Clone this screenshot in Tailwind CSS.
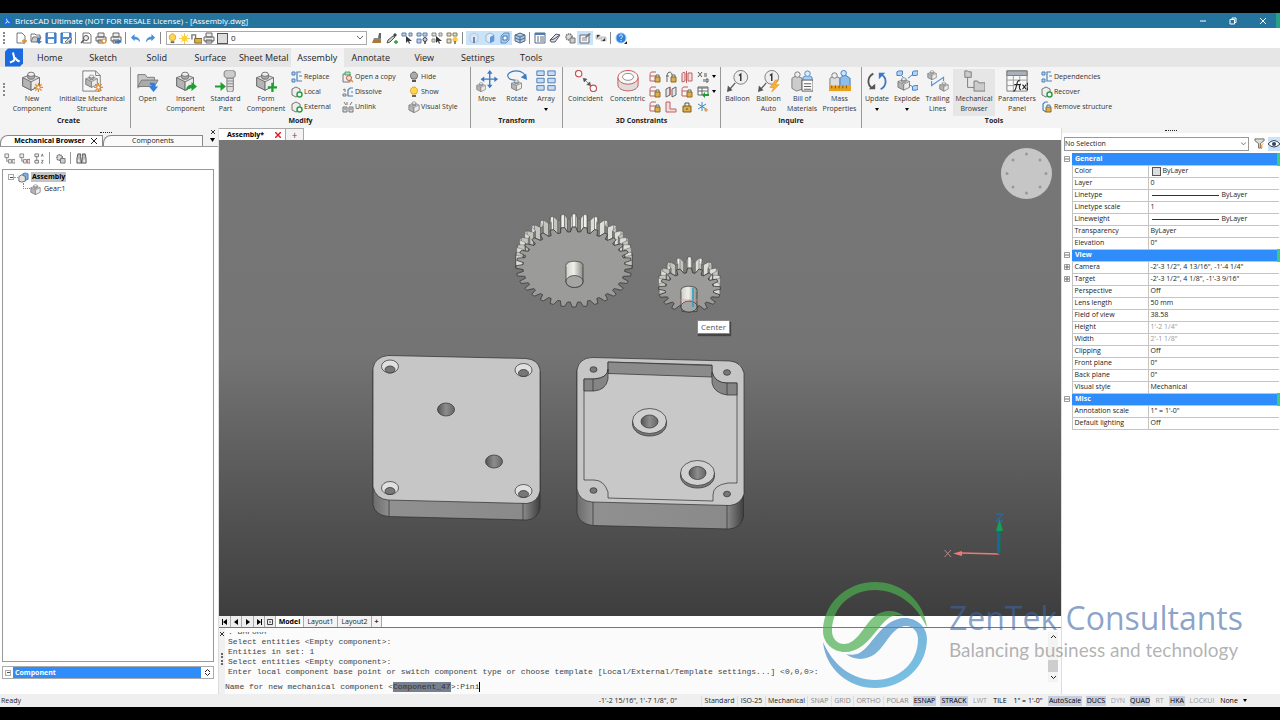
<!DOCTYPE html>
<html lang="en">
<head>
    <meta charset="UTF-8">
    <meta name="viewport" content="width=device-width, initial-scale=1.0">
    <title>BricsCAD Ultimate - [Assembly.dwg]</title>
    <script src="https://cdn.jsdelivr.net/npm/@tailwindcss/browser@4"></script>
</head>
<body class="bg-black font-['Open_Sans','Noto_Sans',sans-serif] text-[#222] text-[7px] leading-[10px]">

    <!-- Icon sprite -->
    <svg class="absolute size-0" aria-hidden="true">
        <defs>
            <linearGradient id="blue-fade" x1="0" y1="0" x2="1" y2="1"><stop offset="0" stop-color="#3fb0e0"/><stop offset="1" stop-color="#4a7cba"/></linearGradient>
            <linearGradient id="pin" x1="0" x2="1"><stop offset="0" stop-color="#cfcfca"/><stop offset=".45" stop-color="#f0f0ea"/><stop offset="1" stop-color="#8a8a86"/></linearGradient>
            <linearGradient id="bore" x1="0" x2="1"><stop offset="0" stop-color="#555"/><stop offset=".5" stop-color="#8d8d8d"/><stop offset="1" stop-color="#666"/></linearGradient>
            <linearGradient id="side" x1="0" x2="1"><stop offset="0" stop-color="#6c6c6c"/><stop offset=".1" stop-color="#909090"/><stop offset=".9" stop-color="#8a8a8a"/><stop offset="1" stop-color="#3f3f3f"/></linearGradient>
        </defs>
        <symbol id="cube" viewBox="0 0 24 24">
            <g stroke="#666" stroke-width="1" stroke-linejoin="round">
                <path d="M2 8 12 4l10 4v10l-10 5L2 18z" fill="#d9d9d9"/>
                <path d="M2 8l10 5v10L2 18z" fill="#b4b4b4"/>
                <path d="M22 8l-10 5v10l10-5z" fill="#ececec"/>
                <path d="M8 4v4c0 2.500 8 2.500 8 0V4" fill="#aaa"/>
                <ellipse cx="12" cy="4" rx="4" ry="2.500" fill="#eee"/>
            </g>
        </symbol>
        <symbol id="spark" viewBox="0 0 10 10"><path d="M5 0v10M0 5h10M1.500 1.500l7 7M8.500 1.500l-7 7" stroke="#e48a2a" stroke-width="1.300"/><circle cx="5" cy="5" r="1.800" fill="#fff" stroke="#e48a2a"/></symbol>
        <symbol id="new-component" viewBox="0 0 24 24"><use href="#cube" width="22" height="24"/><use href="#spark" x="14" y="14" width="10" height="10"/></symbol>
        <symbol id="init" viewBox="0 0 24 24"><path d="M2 1h14l5 5v17H2z" fill="#f8f8f8" stroke="#777"/><path d="M16 1v5h5" fill="none" stroke="#777"/><use href="#cube" x="4" y="4" width="15" height="16"/><use href="#spark" x="14" y="14" width="10" height="10"/></symbol>
        <symbol id="open" viewBox="0 0 24 24"><path d="M1 20V5h8l2 3h8v4" fill="#c6c6c6" stroke="#777"/><path d="M1 18l4-7h18l-4 7z" fill="#aaa" stroke="#777"/><path d="M14 14h4c2 0 2 2 2 4h3l-5 6-5-6h3c0-1 0-2-2-2z" fill="#2f7fe0"/></symbol>
        <symbol id="insert" viewBox="0 0 24 24"><use href="#cube" width="22" height="24"/><path d="M12 23c0-5 3-7 6-7v-3l6 5-6 5v-3c-3 0-4 1-6 3z" fill="#1f9e34"/></symbol>
        <symbol id="bolt" viewBox="0 0 24 24"><path d="M10 2l3-2h6l3 2v5l-3 2h-6l-3-2z" fill="#ccc" stroke="#777"/><path d="M13 9h7v13l-1 2h-5l-1-2z" fill="#ddd" stroke="#777"/><path d="M13 12h7M13 15h7M13 18h7" stroke="#888"/><path d="M0 17h6v-4l6 5-6 5v-4H0z" fill="#1f9e34"/></symbol>
        <symbol id="form" viewBox="0 0 24 24"><use href="#cube" width="22" height="24"/><path d="M19 14v10M14 19h10" stroke="#1f9e34" stroke-width="2.500"/></symbol>
        <symbol id="move" viewBox="0 0 24 24"><path d="M15 2v16M7 10h16" stroke="#3b79c4" stroke-width="1.500"/><path d="M15 0l3 4h-6zM15 20l3-4h-6zM5 10l4-3v6zM24 10l-4-3v6z" fill="#3b79c4"/><use href="#cube" y="13" width="11" height="11"/></symbol>
        <symbol id="rotate" viewBox="0 0 24 24"><path d="M20 9c2-5-3-8-9-8S1 4 2 7s5 4 8 4" fill="none" stroke="#3b79c4" stroke-width="1.300"/><path d="M16 8l6-4 1 7z" fill="#3b79c4"/><use href="#cube" x="5" y="10" width="13" height="13"/></symbol>
        <symbol id="array" viewBox="0 0 24 24"><g fill="#c8ddf5" stroke="#4479b5"><path d="M2 1h8v5H2zM14 1h8v5h-8zM2 9h8v5H2zM14 9h8v5h-8zM2 17h8v5H2zM14 17h8v5h-8z"/></g></symbol>
        <symbol id="coincident" viewBox="0 0 24 24"><g fill="#fff" stroke="#c75050" stroke-width="1.300"><circle cx="4" cy="4" r="3.500"/><circle cx="20" cy="20" r="3.500"/></g><path d="M10 10l6 6M9 9l4 1-3 3zM17 17l-4-1 3-3z" stroke="#555" fill="#555" stroke-width=".7"/></symbol>
        <symbol id="concentric" viewBox="0 0 24 24"><g stroke="#c75050"><path d="M1 8v8c0 9 22 9 22 0V8" fill="#ddd"/><ellipse cx="12" cy="8" rx="11" ry="7.500" fill="#f7f7f7"/><ellipse cx="12" cy="7.500" rx="6" ry="3.800" fill="#fff" stroke="#888"/></g></symbol>
        <symbol id="balloon" viewBox="0 0 24 24"><circle cx="15" cy="8" r="7.500" fill="#eee" stroke="#777"/><path d="M13 6l2-1.500V12" fill="none" stroke="#333" stroke-width="1.600"/><path d="M9 14l-6 7" stroke="#555" stroke-width="1.300"/><path d="M0 24l1-7 5 5z" fill="#555"/></symbol>
        <symbol id="balloon-auto" viewBox="0 0 24 24"><use href="#balloon" width="24" height="24"/><path d="M19 11l-6 8h4l-2 5 8-8h-4l3-5z" fill="#fbb03a" stroke="#d98a10" stroke-width=".6"/></symbol>
        <symbol id="bill" viewBox="0 0 24 24"><path d="M1 9l5-3 6 3v12l-6 2-5-3z" fill="#ccc" stroke="#777"/><circle cx="7" cy="5" r="3" fill="#eee" stroke="#777"/><path d="M13 8l5-3 5 3v4H13z" fill="#a9cdf0" stroke="#4a86c2"/><circle cx="18" cy="4" r="3" fill="#dcecfa" stroke="#4a86c2"/><path d="M12 11h12v12H12z" fill="#fff" stroke="#555"/><path d="M14 15h8M14 18h8M14 21h8" stroke="#555"/></symbol>
        <symbol id="mass" viewBox="0 0 24 24"><path d="M1 9l5-3 6 3v9H1z" fill="#ddd" stroke="#777"/><circle cx="6" cy="6" r="3" fill="#eee" stroke="#777"/><path d="M12 9l5-4 6 4v9H12z" fill="#8fbdea" stroke="#3b79c4"/><circle cx="16" cy="3.500" r="3" fill="#d0e4f8" stroke="#3b79c4"/><path d="M0 17h24v6H0z" fill="#e9a21d"/><path d="M3 17v3M7 17v3M11 17v3M15 17v3M19 17v3" stroke="#7a5208"/></symbol>
        <symbol id="update" viewBox="0 0 24 24"><path d="M8 4C1 8 1 16 7 20" fill="none" stroke="#555" stroke-width="2"/><path d="M3 21h7v-6z" fill="#555"/><path d="M16 21c7-4 7-12 1-16" fill="none" stroke="#3b79c4" stroke-width="2"/><path d="M14 10V3h7z" fill="#3b79c4"/></symbol>
        <symbol id="explode" viewBox="0 0 24 24"><use href="#cube" x="1" y="7" width="15" height="16"/><g fill="#b5d3f2" stroke="#3b79c4"><path d="M1 2l2-1h4v4l-2 1H1zM18 2l2-1h4v4l-2 1h-4zM18 18l2-1h4v4l-2 1h-4z"/><path d="M13 9l5-4M14 16l4 2M6 6l2 2"/></g></symbol>
        <symbol id="trailing" viewBox="0 0 24 24"><use href="#cube" width="11" height="11"/><use href="#cube" x="13" y="12" width="11" height="12"/><path d="M5 12v5l13-9v4" fill="none" stroke="#5b95d6" stroke-width="1.300"/></symbol>
        <symbol id="browser" viewBox="0 0 24 24"><path d="M2 1h3l1 1h3v6H2zM12 12h4l1 2h7v9H12z" fill="#ccc" stroke="#777"/><path d="M5 8v11h7" fill="none" stroke="#777"/></symbol>
        <symbol id="params" viewBox="0 0 24 24"><path d="M1 1h22v22H1z" fill="#f8f8f8" stroke="#777"/><path d="M1 1h22v5H1z" fill="#aab0b8" stroke="#777"/><path d="M8 6v17M15 6v6M1 11h22M1 17h8" stroke="#999"/><path d="M15 12c-4-3-3 12-7 11M9 16h6M16 15c-2 3-2 5 0 7M18 16l4 5M22 16l-4 5M23 14c2 3 1 6 0 8" fill="none" stroke="#222" stroke-width="1.200"/></symbol>
        <symbol id="lamp-off" viewBox="0 0 12 12"><path d="M4 8C1 5 3 1 6 1s5 4 2 7z" fill="#aaa" stroke="#666"/><path d="M4 9h4v2H4z" fill="#555"/></symbol>
        <symbol id="lamp-on" viewBox="0 0 12 12"><path d="M4 8C1 5 3 1 6 1s5 4 2 7z" fill="#ffd453" stroke="#dba220"/><path d="M4 9h4v2H4z" fill="#666"/></symbol>
        <symbol id="sub-blue" viewBox="0 0 12 12"><path d="M1 1h3v3H1zM1 8h3v3H1z" fill="#bbd3ee" stroke="#4a80bd"/><path d="M10 1H6v9h5M11 5H8" fill="none" stroke="#4a80bd" stroke-width="1.200"/></symbol>
        <symbol id="sub-copy" viewBox="0 0 12 12"><path d="M1 3h7v8H1z" fill="#eee" stroke="#777"/><path d="M3 1h5v3H3z" fill="#b9dcc0" stroke="#28a045" stroke-width=".8"/><circle cx="7" cy="7" r="2.500" fill="#f7ded0" stroke="#c06040"/><path d="M9 9l2 2" stroke="#e48a2a" stroke-width="1.500"/></symbol>
        <symbol id="sub-dissolve" viewBox="0 0 12 12"><path d="M1 4l2-1v3M1 8h3v2H1z" fill="none" stroke="#777"/><path d="M11 2H8L6 4v6h5M11 6H9" fill="none" stroke="#4a80bd" stroke-width="1.200"/></symbol>
        <symbol id="sub-green" viewBox="0 0 12 12"><path d="M1 3l4-2 4 2v6l-4 2-4-2z" fill="#eee" stroke="#777"/><circle cx="8.500" cy="8.500" r="2.500" fill="#fff" stroke="#28a045" stroke-width="1.500"/></symbol>
        <symbol id="sub-grey" viewBox="0 0 12 12"><path d="M1 6h4v5H1zM7 6h4v5H7zM2 8h2M8 8h2" fill="#ddd" stroke="#777"/><path d="M2 1l2 3M5 1v3M10 1L8 4" stroke="#777"/></symbol>
        <symbol id="sub-lock" viewBox="0 0 12 12"><path d="M7 1H3C1 1 1 3 1 5v5h6M1 5h6" fill="none" stroke="#c06060"/><path d="M6 6h5v5H6z" fill="#e0ae48" stroke="#8a6a20"/><path d="M7 6V4h3v2" fill="none" stroke="#666"/></symbol>
        <symbol id="sub-arc" viewBox="0 0 12 12"><path d="M2 11V5c0-5 5-5 5-1M1 5h3" fill="none" stroke="#666"/><path d="M6 6h5v5H6z" fill="#e0ae48" stroke="#8a6a20"/><path d="M7 6V4h3v2" fill="none" stroke="#666"/></symbol>
        <symbol id="sub-remove" viewBox="0 0 12 12"><path d="M7 1H4L2 3v6l3 2" fill="none" stroke="#4a80bd" stroke-width="1.200"/><path d="M5 6h5v5H5z" fill="#e0ae48" stroke="#8a6a20"/><path d="M6 6V4h3v2" fill="#bbd3ee" stroke="#4a80bd"/></symbol>
        <symbol id="sub-pair" viewBox="0 0 12 12"><path d="M1 3l4-2v8l-4 2zM7 3l4-2v8l-4 2z" fill="#e4e4e4" stroke="#666"/><path d="M5 1v8" stroke="#c75050"/></symbol>
        <symbol id="sub-sym" viewBox="0 0 12 12"><path d="M1 3c0-2 3-2 3-1v8l-3 1zM7 2h4v8H7z" fill="#f0dede" stroke="#c06060"/><path d="M5.500 0v12" stroke="#c06060"/></symbol>
        <symbol id="sub-red" viewBox="0 0 12 12"><path d="M1 1h4v7h6v3H1z" fill="#f0dede" stroke="#c06060"/></symbol>
        <symbol id="sub-padlock" viewBox="0 0 12 12"><path d="M2 5h8v6H2z" fill="#e0ae48" stroke="#7a6020"/><path d="M4 5V2h4v3M6 7v2" fill="none" stroke="#555"/></symbol>
        <symbol id="sub-star" viewBox="0 0 12 12"><path d="M5 1v9M1 3l8 5M9 3L1 8" stroke="#3b8ac4"/><path d="M9 7v4M7 9h4" stroke="#e48a2a"/></symbol>
        <symbol id="sub-dim" viewBox="0 0 12 12"><path d="M1 1l4 5M5 1L1 6M7 3h3M7 5h3M7 8v3M9 8h2v3H9z" fill="none" stroke="#555"/></symbol>
        <symbol id="sub-table" viewBox="0 0 12 12"><path d="M1 1h10v8H1z" fill="#fff" stroke="#666"/><path d="M1 2h10M1 5h10M5 2v7" stroke="#666"/><path d="M12 8H8V6L5 9l3 3v-2h4z" fill="#1f9e34"/></symbol>
        <symbol id="q-new" viewBox="0 0 12 12"><path d="M2 1h5l3 3v7H2z" fill="#fff" stroke="#777"/><path d="M9 7v5M7 9h5" stroke="#e48a2a" stroke-width="1.300"/></symbol>
        <symbol id="q-open" viewBox="0 0 12 12"><path d="M1 2h4l1 1h4v3M1 2v7" fill="none" stroke="#777"/><path d="M3 5h8l-2 5H1z" fill="#ccc" stroke="#777"/><path d="M7 6h3v3h2l-3 3-3-3h1z" fill="#3b79c4"/></symbol>
        <symbol id="q-save" viewBox="0 0 12 12"><path d="M1 1h10v10H1z" fill="#4f8fd8" stroke="#2e68ae"/><path d="M3 1h6v4H3zM3 7h6v4H3z" fill="#fff"/></symbol>
        <symbol id="q-saveas" viewBox="0 0 12 12"><use href="#q-save" width="12" height="12"/><path d="M5 10l5-5 2 2-5 4z" fill="#ddd" stroke="#555" stroke-width=".7"/></symbol>
        <symbol id="q-preview" viewBox="0 0 12 12"><path d="M3 1h6l2 2v8H3z" fill="#fff" stroke="#777"/><circle cx="6" cy="6" r="2.500" fill="#eee" stroke="#555"/><path d="M4 8l-3 3" stroke="#555" stroke-width="1.500"/></symbol>
        <symbol id="q-print" viewBox="0 0 12 12"><path d="M3 1h6v4H3zM1 5h10v4H1zM3 8h6v3H3z" fill="#eee" stroke="#666"/></symbol>
        <symbol id="q-printer" viewBox="0 0 12 12"><use href="#q-print" width="12" height="12"/><circle cx="9" cy="9" r="2" fill="#fff" stroke="#e48a2a" stroke-width="1.200"/></symbol>
        <symbol id="q-plot" viewBox="0 0 12 12"><use href="#q-print" width="12" height="12"/><path d="M5 9h3V7l4 3-4 2v-1H5z" fill="#3b79c4"/></symbol>
        <symbol id="q-undo" viewBox="0 0 12 12"><path d="M1 5l4-4v3c4 0 6 3 6 6-2-3-4-3-6-3v2z" fill="#4a90d9"/></symbol>
        <symbol id="q-redo" viewBox="0 0 12 12"><path d="M11 5L7 1v3C3 4 1 7 1 10c2-3 4-3 6-3v2z" fill="#4a90d9"/></symbol>
        <symbol id="sun" viewBox="0 0 12 12"><path d="M6 0v12M0 6h12M2 2l8 8M10 2l-8 8" stroke="#f0b81e" stroke-width=".8"/><circle cx="6" cy="6" r="3" fill="#ffd22e"/></symbol>
        <symbol id="unlock" viewBox="0 0 12 12"><path d="M4 6h8v5H4z" fill="#e0ae48" stroke="#7a6020"/><path d="M1 7V2h4v4" fill="none" stroke="#777" stroke-width="1.500"/></symbol>
        <symbol id="q-brush" viewBox="0 0 12 12"><path d="M1 11l2-5h7v5z" fill="#a97740"/><path d="M3 6h7v2H3z" fill="#888"/><path d="M8 1h2v5H7z" fill="#666"/></symbol>
        <symbol id="q-pick" viewBox="0 0 12 12"><path d="M1 11l1-3 5-4 2 1-5 5z" fill="#ccc" stroke="#555"/><path d="M7 3l2-2 2 2-2 2z" fill="#444"/><path d="M10 8v4M8 10h4" stroke="#1f9e34" stroke-width="1.300"/></symbol>
        <symbol id="q-select" viewBox="0 0 12 12"><path d="M1 1h4v3H1zM8 1h3v3H8z" fill="#bcd3ee" stroke="#5a7fa8"/><path d="M5 4v7l2-2 1 3 1-1-1-2h3z" fill="#333"/></symbol>
        <symbol id="q-select2" viewBox="0 0 12 12"><path d="M1 1h4v3H1zM8 1h3v3H8zM1 7h3v3H1z" fill="#ddd" stroke="#888"/><path d="M5 4v7l2-2 1 3 1-1-1-2h3z" fill="#333"/></symbol>
        <symbol id="q-grid" viewBox="0 0 12 12"><path d="M1 1h4v3H1zM7 1h4v3H7zM1 7h4v4H1z" fill="#bcd3ee" stroke="#5a7fa8"/><circle cx="9" cy="7.500" r="2" fill="#ccc" stroke="#444"/><path d="M9 9v3" stroke="#444" stroke-width="1.500"/></symbol>
        <symbol id="q-gridlamp" viewBox="0 0 12 12"><path d="M1 1h4v3H1zM7 1h4v3H7zM1 7h4v4H1z" fill="#ddd" stroke="#8a7a50"/><circle cx="9" cy="7.500" r="2.500" fill="#ffc838"/><path d="M9 9v3" stroke="#666" stroke-width="1.500"/></symbol>
        <symbol id="q-solid" viewBox="0 0 12 12"><path d="M2 3l4-2 4 2v6l-4 2-4-2z" fill="#dbe6f2" stroke="#a9c0da" stroke-width=".8"/><path d="M6 5v6" stroke="#4a6f9d" stroke-width="1.500"/></symbol>
        <symbol id="q-face" viewBox="0 0 12 12"><path d="M2 3l4-2 4 2v6l-4 2-4-2z" fill="#e4edf7" stroke="#8fabca" stroke-width=".8"/><path d="M6 5l4-2v6l-4 2z" fill="#5c97dd"/></symbol>
        <symbol id="q-edge" viewBox="0 0 12 12"><path d="M2 4l3-3h5v7l-3 3H2z" fill="#aacdf3" stroke="#5d8cc2"/><path d="M4 4h4v4H4z" fill="#fff" stroke="#3d70ac"/></symbol>
        <symbol id="q-cube" viewBox="0 0 12 12"><path d="M1 3l5-2 5 2v6l-5 2-5-2z" fill="#b3c6dc" stroke="#4d6d92"/><path d="M1 3l5 2 5-2M6 5v6M1 6l5 2 5-2" fill="none" stroke="#4d6d92"/></symbol>
        <symbol id="q-list" viewBox="0 0 12 12"><path d="M1 1h10v10H1z" fill="#fff" stroke="#4d6d92"/><path d="M1 1h10v2H1z" fill="#4d7db5"/><path d="M3 5h2M3 7h2M3 9h2M6 5h4M6 7h4M6 9h4" stroke="#667"/></symbol>
        <symbol id="q-eraser" viewBox="0 0 12 12"><path d="M1 8l6-6 4 1-5 7H2z" fill="#dde" stroke="#556"/><path d="M1 8l4-1 6-4" fill="none" stroke="#556"/></symbol>
        <symbol id="q-gear" viewBox="0 0 12 12"><circle cx="5" cy="5" r="3" fill="#ddd" stroke="#777" stroke-width="1.600" stroke-dasharray="1.500 .6"/><path d="M6 6h5v5H6z" fill="#ccc" stroke="#777"/></symbol>
        <symbol id="q-edit" viewBox="0 0 12 12"><path d="M1 3h9v8H1z" fill="#f4f4f4" stroke="#667"/><path d="M3 6h5M3 8h5" stroke="#889"/><path d="M6 5l4-4 2 1-5 4z" fill="#777"/></symbol>
        <symbol id="q-swap" viewBox="0 0 12 12"><path d="M1 3h4v4H1zM6 5h5v4H6z" fill="#ddd" stroke="#aaa" stroke-width=".7"/><path d="M2 6V3h3zM10 6v3H7z" fill="#333"/></symbol>
        <symbol id="q-help" viewBox="0 0 12 12"><circle cx="6" cy="6" r="5" fill="#2b83dd" stroke="#9cc7f0"/><path d="M4.500 4.500c0-2 3-2 3 0 0 1-1.500 1-1.500 2.500M6 8v1.200" fill="none" stroke="#fff"/><path d="M9 12h3V9z" fill="#222"/></symbol>
        <symbol id="tree" viewBox="0 0 12 12"><path d="M1 1h4v4H1zM5 7h3v4H5zM9 7h3v4H9zM3 5v4h2" fill="#eee" stroke="#777" stroke-width=".9"/></symbol>
        <symbol id="tree-red" viewBox="0 0 12 12"><path d="M1 1h4v4H1zM5 7h3v4H5zM3 5v4h2" fill="#eee" stroke="#777" stroke-width=".9"/><path d="M9 7h3v4H9z" fill="#f3d9d9" stroke="#a55" stroke-width=".9"/></symbol>
        <symbol id="sort" viewBox="0 0 12 12"><path d="M1 1h4v3H1zM1 8h4v3H1zM3 4v4" fill="#eee" stroke="#777"/><path d="M8 4l1-3 1 3M8 8h2l-2 3h2" fill="none" stroke="#555" stroke-width=".8"/></symbol>
        <symbol id="find" viewBox="0 0 12 12"><path d="M2 1h3v3l1 7H1V6zM10 1H7v3L6 11h5V6z" fill="#bbb" stroke="#555"/><path d="M2 7h2v3H2zM8 7h2v3H8z" fill="#eee"/></symbol>
        <symbol id="brics" viewBox="0 0 18 18"><path d="M0 3l3-3h15v15l-3 3H0z" fill="#1b6be0"/><path d="M8 4c1 5 2 6 1 8-1 1-2 1-4 2" fill="none" stroke="#fff" stroke-width="2"/><path d="M10 9c1 2 2 3 3 3" fill="none" stroke="#fff" stroke-width="2"/><circle cx="13.500" cy="12.500" r="1.300" fill="#fff"/></symbol>
    </svg>

    <div class="relative flex min-h-screen flex-col py-[13px]">

        <!-- Title bar -->
        <header class="flex h-[15px] shrink-0 items-center border-r-4 border-[#27a085] bg-[#25749e] pl-[3px] text-[8px] text-white">
            <svg class="mr-1 size-2"><use href="#brics"/></svg>
            <h1>BricsCAD Ultimate (NOT FOR RESALE License) - [Assembly.dwg]</h1>
            <div class="ml-auto flex gap-[22px] pr-[9px]">
                <button aria-label="Minimize"><svg class="size-2" viewBox="0 0 8 8"><path d="M1 4h6" stroke="#fff"/></svg></button>
                <button aria-label="Restore"><svg class="size-2" viewBox="0 0 8 8"><path d="M1 2.500h4.500V7H1zM3 2V1h4v4.500H6" fill="none" stroke="#fff"/></svg></button>
                <button aria-label="Close"><svg class="size-2" viewBox="0 0 8 8"><path d="M1 1l6 6M7 1L1 7" stroke="#fff"/></svg></button>
            </div>
        </header>

        <!-- Quick access toolbar -->
        <div class="flex h-5 shrink-0 items-center bg-white pl-[3px]">
            <span class="mr-2 h-3 border-l-2 border-dotted border-[#888]"></span>
            <button class="flex w-[15px] justify-center" aria-label="New"><svg class="size-3"><use href="#q-new"/></svg></button>
            <button class="flex w-[15px] justify-center" aria-label="Open"><svg class="size-3"><use href="#q-open"/></svg></button>
            <button class="flex w-[15px] justify-center" aria-label="Save"><svg class="size-3"><use href="#q-save"/></svg></button>
            <button class="flex w-[15px] justify-center" aria-label="Save as"><svg class="size-3"><use href="#q-saveas"/></svg></button>
            <span class="mx-[2px] h-3 w-px bg-[#888]"></span>
            <button class="flex w-[15px] justify-center" aria-label="Print preview"><svg class="size-3"><use href="#q-preview"/></svg></button>
            <button class="flex w-[15px] justify-center" aria-label="Print"><svg class="size-3"><use href="#q-printer"/></svg></button>
            <button class="flex w-[15px] justify-center" aria-label="Publish"><svg class="size-3"><use href="#q-plot"/></svg></button>
            <span class="mx-[2px] h-3 w-px bg-[#888]"></span>
            <button class="flex w-[15px] justify-center" aria-label="Undo"><svg class="size-[11px]"><use href="#q-undo"/></svg></button>
            <button class="flex w-[15px] justify-center" aria-label="Redo"><svg class="size-[11px]"><use href="#q-redo"/></svg></button>
            <span class="mx-[2px] h-3 w-px bg-[#888]"></span>
            <button class="ml-[3px] flex h-[14px] w-[201px] items-center gap-px border border-[#aaa] bg-white pr-[3px] text-[8px]" aria-label="Current layer">
                <svg class="size-[11px]"><use href="#lamp-on"/></svg>
                <svg class="size-[11px]"><use href="#sun"/></svg>
                <svg class="size-[11px]"><use href="#unlock"/></svg>
                <svg class="size-3"><use href="#q-print"/></svg>
                <span class="ml-px size-[11px] border border-[#555] bg-[#ddd]"></span>
                <span class="ml-[2px]">0</span>
                <svg class="ml-auto h-1 w-[6px]" viewBox="0 0 6 4"><path d="M0 0l3 3 3-3" fill="none" stroke="#666"/></svg>
            </button>
            <button class="ml-[2px] flex w-[15px] justify-center" aria-label="Match properties"><svg class="size-3"><use href="#q-brush"/></svg></button>
            <button class="flex w-[15px] justify-center" aria-label="Pick"><svg class="size-3"><use href="#q-pick"/></svg></button>
            <button class="flex w-[15px] justify-center" aria-label="Select"><svg class="size-3"><use href="#q-select"/></svg></button>
            <button class="flex w-[15px] justify-center" aria-label="Hide entities"><svg class="size-3"><use href="#q-grid"/></svg></button>
            <button class="flex w-[15px] justify-center" aria-label="Isolate entities"><svg class="size-3"><use href="#q-select2"/></svg></button>
            <button class="flex w-[15px] justify-center" aria-label="Show entities"><svg class="size-3"><use href="#q-gridlamp"/></svg></button>
            <span class="mx-[3px] h-3 w-px bg-[#888]"></span>
            <button class="flex w-4 justify-center bg-[#cbe3f8] py-px" aria-label="Select edges"><svg class="size-3"><use href="#q-solid"/></svg></button>
            <button class="flex w-[15px] justify-center bg-[#cbe3f8] py-px" aria-label="Select faces"><svg class="size-3"><use href="#q-face"/></svg></button>
            <button class="flex w-[15px] justify-center bg-[#cbe3f8] py-px" aria-label="Detect boundaries"><svg class="size-3"><use href="#q-edge"/></svg></button>
            <button class="flex w-[15px] justify-center" aria-label="Select solids"><svg class="size-3"><use href="#q-cube"/></svg></button>
            <span class="mx-[2px] h-3 w-px bg-[#888]"></span>
            <button class="flex w-[15px] justify-center" aria-label="Properties"><svg class="size-3"><use href="#q-list"/></svg></button>
            <button class="flex w-[15px] justify-center" aria-label="Purge"><svg class="size-3"><use href="#q-eraser"/></svg></button>
            <button class="flex w-[15px] justify-center" aria-label="Settings"><svg class="size-3"><use href="#q-gear"/></svg></button>
            <button class="flex w-4 justify-center bg-[#cbe3f8] py-px" aria-label="Customize"><svg class="size-3"><use href="#q-edit"/></svg></button>
            <button class="flex w-[15px] justify-center" aria-label="Switch"><svg class="size-3"><use href="#q-swap"/></svg></button>
            <span class="mx-[2px] h-3 w-px bg-[#888]"></span>
            <button class="flex w-[15px] justify-center" aria-label="Help"><svg class="size-3"><use href="#q-help"/></svg></button>
        </div>

        <!-- Ribbon tabs -->
        <nav class="flex h-[19px] shrink-0 items-stretch bg-[#e6e6e6] pl-[5px] text-[9px]">
            <svg class="h-[19px] w-[18px]"><use href="#brics"/></svg>
            <div class="grid w-[535px] grid-cols-10 whitespace-nowrap">
                <button>Home</button>
                <button>Sketch</button>
                <button>Solid</button>
                <button>Surface</button>
                <button>Sheet Metal</button>
                <button class="bg-[#f4f4f4]">Assembly</button>
                <button>Annotate</button>
                <button>View</button>
                <button>Settings</button>
                <button>Tools</button>
            </div>
        </nav>

        <!-- Ribbon -->
        <div class="flex h-[61px] shrink-0 bg-[#f4f4f4] pl-[3px] text-center text-[#333]">
            <span class="mt-4 mr-[2px] h-[13px] border-l-2 border-dotted border-[#888]"></span>
            <section class="flex w-[124px] flex-col border-r border-[#999]">
                <div class="flex flex-1">
                    <button class="flex w-[50px] flex-col items-center pt-[3px]"><svg class="mb-[2px] size-[22px]"><use href="#new-component"/></svg>New<br>Component</button>
                    <button class="flex w-[70px] flex-col items-center pt-[3px]"><svg class="mb-[2px] size-[22px]"><use href="#init"/></svg>Initialize Mechanical<br>Structure</button>
                </div>
                <h2 class="h-3 font-bold text-[#222]">Create</h2>
            </section>
            <section class="flex w-[340px] flex-col border-r border-[#999]">
                <div class="flex flex-1">
                    <button class="flex w-[33px] flex-col items-center pt-[3px]"><svg class="mb-[2px] size-[22px]"><use href="#open"/></svg>Open</button>
                    <button class="flex w-[43px] flex-col items-center pt-[3px]"><svg class="mb-[2px] size-[22px]"><use href="#insert"/></svg>Insert<br>Component</button>
                    <button class="flex w-[37px] flex-col items-center pt-[3px]"><svg class="mb-[2px] size-[22px]"><use href="#bolt"/></svg>Standard<br>Part</button>
                    <button class="flex w-[44px] flex-col items-center pt-[3px]"><svg class="mb-[2px] size-[22px]"><use href="#form"/></svg>Form<br>Component</button>
                    <div class="flex w-[54px] flex-col items-start pt-[2px] pl-[3px]">
                        <button class="flex h-[15px] items-center gap-px"><svg class="size-3"><use href="#sub-blue"/></svg>Replace</button>
                        <button class="flex h-[15px] items-center gap-px"><svg class="size-3"><use href="#sub-green"/></svg>Local</button>
                        <button class="flex h-[15px] items-center gap-px"><svg class="size-3"><use href="#sub-green"/></svg>External</button>
                    </div>
                    <div class="flex w-[66px] flex-col items-start pt-[2px]">
                        <button class="flex h-[15px] items-center gap-px"><svg class="size-3"><use href="#sub-copy"/></svg>Open a copy</button>
                        <button class="flex h-[15px] items-center gap-px"><svg class="size-3"><use href="#sub-dissolve"/></svg>Dissolve</button>
                        <button class="flex h-[15px] items-center gap-px"><svg class="size-3"><use href="#sub-grey"/></svg>Unlink</button>
                    </div>
                    <div class="flex flex-col items-start pt-[2px]">
                        <button class="flex h-[15px] items-center gap-px"><svg class="size-3"><use href="#lamp-off"/></svg>Hide</button>
                        <button class="flex h-[15px] items-center gap-px"><svg class="size-3"><use href="#lamp-on"/></svg>Show</button>
                        <button class="flex h-[15px] items-center gap-px"><svg class="size-3"><use href="#cube"/></svg>Visual Style</button>
                    </div>
                </div>
                <h2 class="h-3 font-bold text-[#222]">Modify</h2>
            </section>
            <section class="flex w-[92px] flex-col border-r border-[#999]">
                <div class="flex flex-1">
                    <button class="flex w-[32px] flex-col items-center pt-[3px]"><svg class="mb-[2px] size-[22px]"><use href="#move"/></svg>Move</button>
                    <button class="flex w-[28px] flex-col items-center pt-[3px]"><svg class="mb-[2px] size-[22px]"><use href="#rotate"/></svg>Rotate</button>
                    <button class="flex w-[30px] flex-col items-center pt-[3px]"><svg class="mb-[2px] size-[22px]"><use href="#array"/></svg>Array<svg class="mt-1 h-[3px] w-1" viewBox="0 0 4 3"><path d="M0 0h4L2 3z"/></svg></button>
                </div>
                <h2 class="h-3 font-bold text-[#222]">Transform</h2>
            </section>
            <section class="flex w-[158px] flex-col border-r border-[#999]">
                <div class="flex flex-1">
                    <button class="flex w-[45px] flex-col items-center pt-[3px]"><svg class="mb-[2px] size-[22px]"><use href="#coincident"/></svg>Coincident</button>
                    <button class="flex w-[39px] flex-col items-center pt-[3px]"><svg class="mb-[2px] size-[22px]"><use href="#concentric"/></svg>Concentric</button>
                    <div class="grid h-[47px] grid-cols-4 place-items-center gap-x-1 pt-[2px] pl-[2px]">
                        <button aria-label="Coplanar"><svg class="size-3"><use href="#sub-lock"/></svg></button>
                        <button aria-label="Tangent"><svg class="size-3"><use href="#sub-arc"/></svg></button>
                        <button aria-label="Symmetric"><svg class="size-3"><use href="#sub-sym"/></svg></button>
                        <button aria-label="Distance"><svg class="size-3"><use href="#sub-dim"/></svg></button>
                        <button aria-label="Radius"><svg class="size-3"><use href="#sub-lock"/></svg></button>
                        <button aria-label="Parallel"><svg class="size-3"><use href="#sub-pair"/></svg></button>
                        <button aria-label="Angle"><svg class="size-3"><use href="#sub-lock"/></svg></button>
                        <button aria-label="Table"><svg class="size-3"><use href="#sub-table"/></svg></button>
                        <button aria-label="Rigid set"><svg class="size-3"><use href="#sub-lock"/></svg></button>
                        <button aria-label="Perpendicular"><svg class="size-3"><use href="#sub-red"/></svg></button>
                        <button aria-label="Fix"><svg class="size-3"><use href="#sub-padlock"/></svg></button>
                        <button aria-label="Path"><svg class="size-3"><use href="#sub-star"/></svg></button>
                    </div>
                    <div class="flex flex-col gap-3 pt-2 pl-[3px]">
                        <svg class="h-[3px] w-1" viewBox="0 0 4 3"><path d="M0 0h4L2 3z"/></svg>
                        <svg class="h-[3px] w-1" viewBox="0 0 4 3"><path d="M0 0h4L2 3z"/></svg>
                    </div>
                </div>
                <h2 class="h-3 font-bold text-[#222]">3D Constraints</h2>
            </section>
            <section class="flex w-[141px] flex-col border-r border-[#999]">
                <div class="flex flex-1">
                    <button class="flex w-[33px] flex-col items-center pt-[3px]"><svg class="mb-[2px] size-[22px]"><use href="#balloon"/></svg>Balloon</button>
                    <button class="flex w-[29px] flex-col items-center pt-[3px]"><svg class="mb-[2px] size-[22px]"><use href="#balloon-auto"/></svg>Balloon<br>Auto</button>
                    <button class="flex w-[38px] flex-col items-center pt-[3px]"><svg class="mb-[2px] size-[22px]"><use href="#bill"/></svg>Bill of<br>Materials</button>
                    <button class="flex w-[37px] flex-col items-center pt-[3px]"><svg class="mb-[2px] size-[22px]"><use href="#mass"/></svg>Mass<br>Properties</button>
                </div>
                <h2 class="h-3 font-bold text-[#222]">Inquire</h2>
            </section>
            <section class="flex w-[264px] flex-col">
                <div class="flex flex-1">
                    <button class="flex w-[30px] flex-col items-center pt-[3px]"><svg class="mb-[2px] size-[22px]"><use href="#update"/></svg>Update<svg class="mt-1 h-[3px] w-1" viewBox="0 0 4 3"><path d="M0 0h4L2 3z"/></svg></button>
                    <button class="flex w-[30px] flex-col items-center pt-[3px]"><svg class="mb-[2px] size-[22px]"><use href="#explode"/></svg>Explode<svg class="mt-1 h-[3px] w-1" viewBox="0 0 4 3"><path d="M0 0h4L2 3z"/></svg></button>
                    <button class="flex w-[31px] flex-col items-center pt-[3px]"><svg class="mb-[2px] size-[22px]"><use href="#trailing"/></svg>Trailing<br>Lines</button>
                    <button class="mt-[2px] flex w-[42px] flex-col items-center bg-[#e6e6e6] pt-px"><svg class="mb-[2px] size-[22px]"><use href="#browser"/></svg>Mechanical<br>Browser</button>
                    <button class="flex w-[44px] flex-col items-center pt-[3px]"><svg class="mb-[2px] size-[22px]"><use href="#params"/></svg>Parameters<br>Panel</button>
                    <div class="flex flex-col items-start pt-[2px] pl-[2px]">
                        <button class="flex h-[15px] items-center gap-px"><svg class="size-3"><use href="#sub-blue"/></svg>Dependencies</button>
                        <button class="flex h-[15px] items-center gap-px"><svg class="size-3"><use href="#sub-green"/></svg>Recover</button>
                        <button class="flex h-[15px] items-center gap-px"><svg class="size-3"><use href="#sub-remove"/></svg>Remove structure</button>
                    </div>
                </div>
                <h2 class="h-3 font-bold text-[#222]">Tools</h2>
            </section>
        </div>

        <main class="flex min-h-0 flex-1 bg-white">

            <!-- Mechanical browser -->
            <aside class="flex w-[219px] shrink-0 flex-col border-r border-[#ddd]">
                <div class="flex h-2 items-center bg-[#f3f3f3] pr-[3px]">
                    <span class="mx-auto w-3 border-t border-dotted border-[#222]"></span>
                    <svg class="size-1" viewBox="0 0 4 4"><path d="M0 0l4 4M4 0L0 4" stroke="#333"/></svg>
                </div>
                <div class="flex h-[11px] items-end border-b border-[#999] bg-[#f3f3f3] text-center">
                    <button class="flex h-[11px] w-[103px] items-center justify-center gap-[6px] rounded-tl-lg border border-b-0 border-[#888] bg-white pl-2 font-bold text-black">Mechanical Browser
                        <svg class="size-[6px]" viewBox="0 0 6 6"><path d="M0 0l6 6M6 0L0 6" stroke="#222"/></svg>
                    </button>
                    <button class="h-[11px] w-[100px] rounded-tl-lg border border-b-0 border-[#888] bg-[#fafafa]">Components</button>
                    <svg class="mb-1 ml-[7px] h-1 w-[5px]" viewBox="0 0 5 4"><path d="M0 0h5L2.500 4z"/></svg>
                </div>
                <div class="flex h-[22px] items-center pl-1">
                    <button aria-label="Expand all"><svg class="mr-1 size-[11px]"><use href="#tree"/></svg></button>
                    <button aria-label="Collapse all"><svg class="mr-1 size-[11px]"><use href="#tree-red"/></svg></button>
                    <button aria-label="Sort"><svg class="mr-1 size-[11px]"><use href="#sort"/></svg></button>
                    <span class="mr-[5px] h-3 w-px bg-[#999]"></span>
                    <button aria-label="Settings"><svg class="mr-1 size-[11px]"><use href="#q-gear"/></svg></button>
                    <span class="mr-[5px] h-3 w-px bg-[#999]"></span>
                    <button aria-label="Find"><svg class="size-[11px]"><use href="#find"/></svg></button>
                </div>
                <div class="mr-[4px] ml-[2px] flex-1 border border-[#999] pt-px pl-[5px]">
                    <div class="flex h-3 items-center">
                        <span class="flex size-[6px] items-center justify-center border border-[#aaa]"><i class="h-px w-[3px] bg-[#555]"></i></span>
                        <i class="w-1 border-t border-dotted border-[#999]"></i>
                        <svg class="mr-[2px] size-[11px]" viewBox="0 0 12 12"><path d="M5 2l3-1 3 1v6L8 9z" fill="#78aee6" stroke="#4a80bd"/><path d="M1 5l3-2 4 2v5l-4 1-3-1z" fill="#e4e4e4" stroke="#666"/></svg>
                        <span class="bg-[#c4c4c4] px-px font-bold text-black">Assembly</span>
                    </div>
                    <div class="flex h-3 items-center pl-[15px]">
                        <i class="mb-[6px] h-[6px] w-[7px] border-b border-l border-dotted border-[#888]"></i>
                        <svg class="mr-[3px] size-[11px]"><use href="#cube"/></svg>
                        <span>Gear:1</span>
                    </div>
                </div>
                <div class="mt-1 mr-[4px] mb-[15px] ml-[2px] flex h-[13px] items-stretch border border-[#aaa]">
                    <span class="flex w-[10px] items-center justify-center"><i class="flex size-[6px] items-center justify-center border border-[#aaa]"><b class="h-px w-[3px] bg-[#555]"></b></i></span>
                    <h2 class="flex flex-1 items-center bg-[#2e8cfb] pl-[2px] font-bold text-white">Component</h2>
                    <button class="flex w-3 flex-col items-center justify-between py-[2px]" aria-label="Scroll">
                        <svg class="h-[3px] w-[5px]" viewBox="0 0 5 3"><path d="M0 3l2.500-2.500L5 3" fill="none" stroke="#222"/></svg>
                        <svg class="h-[3px] w-[5px]" viewBox="0 0 5 3"><path d="M0 0l2.500 2.500L5 0" fill="none" stroke="#222"/></svg>
                    </button>
                </div>
            </aside>

            <!-- Drawing area -->
            <section class="flex min-w-0 flex-1 flex-col">
                <div class="flex h-3 shrink-0">
                    <button class="flex w-[67px] items-center justify-between border-t border-r border-[#aaa] pr-1 pl-2 font-bold text-black">Assembly*
                        <svg class="size-[6px]" viewBox="0 0 6 6"><path d="M0 0l6 6M6 0L0 6" stroke="#d22" stroke-width="1.500"/></svg>
                    </button>
                    <button class="w-[18px] border-t border-r border-[#aaa] bg-[#f3f3f3] text-[10px] text-[#555]">+</button>
                </div>
                <div class="relative min-h-0 flex-1 bg-linear-to-b from-[#777] via-[#747474] via-45% to-[#3e3e3e]">
                    <svg class="absolute inset-0 h-full w-full" viewBox="219 140 842 476">
                        <g stroke="#2e2e2e" stroke-width=".7" stroke-linejoin="round">
                            <g id="gears"></g>

                            <path d="M566 265v17c0 7 17 7 17 0v-17z" fill="url(#pin)"/>
                            <ellipse cx="574.500" cy="265" rx="8.500" ry="4" fill="url(#pin)" stroke="none"/>
                            <path d="M566 265c0-5 17-5 17 0" fill="none"/>
                            <ellipse cx="574.500" cy="281.500" rx="8.500" ry="6" fill="#a5a5a3"/>

                            <path d="M681 290v16c0 8 16 8 16 0v-16z" fill="url(#pin)"/>
                            <ellipse cx="689" cy="290" rx="8" ry="4" fill="url(#pin)" stroke="none"/>
                            <path d="M681 290c0-5 16-5 16 0" fill="none"/>
                            <ellipse cx="689" cy="306.500" rx="8" ry="5.500" fill="#a5a5a3"/>
                            <path d="M693 288v19" stroke="#1fa0c8" stroke-width="1.500"/>
                            <path d="M677 300h22" stroke="#d88"/>

                            <!-- cover plate -->
                            <path d="M373 370v135q2 10 15 11.500L527 520q11-1 13-12V372z" fill="url(#side)"/>
                            <path d="M373 368q2-11 15-12.500L526 358.500q12 1 14 11V491q-2 11-13 12.500L388 500q-12-1-15-13z" fill="#c6c6c6"/>
                            <path d="M389 500v16M523 503v17" fill="none"/>
                            <g fill="#e0e0e0">
                                <ellipse cx="390" cy="366.500" rx="8.500" ry="6.500"/><ellipse cx="523.500" cy="370" rx="8.500" ry="6.500"/>
                                <ellipse cx="390" cy="488" rx="8.500" ry="6.500"/><ellipse cx="523.500" cy="491" rx="8.500" ry="6.500"/>
                            </g>
                            <g fill="#777">
                                <ellipse cx="390" cy="369.500" rx="5" ry="3.500"/><ellipse cx="523.500" cy="373" rx="5" ry="3.500"/>
                                <ellipse cx="390" cy="491" rx="5" ry="3.500"/><ellipse cx="523.500" cy="494" rx="5" ry="3.500"/>
                            </g>
                            <g fill="url(#bore)"><ellipse cx="446" cy="409.500" rx="8.500" ry="6.500"/><ellipse cx="494" cy="461.500" rx="8.500" ry="6.500"/></g>

                            <!-- housing -->
                            <path d="M577 370v143q2 11 16 12.500L729 529q12-1 14.500-12V374z" fill="url(#side)"/>
                            <path d="M577 370q2-12 15-12.500L730 361q11 1 14 12v121q-3 10-14 11.500L592 502q-13-1-15-13z" fill="#c6c6c6"/>
                            <path d="M593 502v23M727 505v24" fill="none"/>
                            <path d="M584 379h10q14-1 14-10v-7l104 3v7q3 11 15 11h10v100h-9q-15 2-15 12v6l-105-3v-6q-4-12-14-12h-10z" fill="#c8c8c8"/>
                            <path d="M608 362l104 3.500v11.500L608 373.500z" fill="#8b8b8b"/>
                            <path d="M584 379h10q14-1 14-10v10q-2 11-14 12h-10z" fill="#858585"/>
                            <path d="M712 372q3 11 15 11h10v12h-10q-13-2-15-12z" fill="#858585"/>
                            <path d="M593 379v12M727 383v12" fill="none"/>
                            <g fill="#777">
                                <path d="M632.500 421v3c1 16 33 16 34 0v-3z"/><path d="M680.500 473v3c1 16 33 16 34 0v-3z"/>
                            </g>
                            <g fill="#d0d0d0"><ellipse cx="649.500" cy="421" rx="17" ry="12.500"/><ellipse cx="697.500" cy="473" rx="17" ry="12.500"/></g>
                            <g fill="url(#bore)"><ellipse cx="649.500" cy="421.500" rx="8.500" ry="6.500"/><ellipse cx="697.500" cy="473" rx="8.500" ry="6.500"/></g>
                            <g fill="#777">
                                <ellipse cx="593.500" cy="369.500" rx="3.500" ry="2.800"/><ellipse cx="727" cy="372.500" rx="3.500" ry="2.800"/>
                                <ellipse cx="593.500" cy="490.500" rx="3.500" ry="2.800"/><ellipse cx="727" cy="494" rx="3.500" ry="2.800"/>
                            </g>
                        </g>

                        <!-- look-from widget -->
                        <circle cx="1026.500" cy="173.500" r="25.500" fill="#c6c6c6"/>
                        <g fill="#999">
                            <circle cx="1026.500" cy="154" r="1.500"/><circle cx="1026.500" cy="193" r="1.500"/><circle cx="1007" cy="173.500" r="1.500"/><circle cx="1046" cy="173.500" r="1.500"/>
                            <circle cx="1013" cy="160" r="1.500"/><circle cx="1040" cy="160" r="1.500"/><circle cx="1013" cy="187" r="1.500"/><circle cx="1040" cy="187" r="1.500"/>
                        </g>

                        <!-- UCS icon -->
                        <path d="M999 554l-38-1" stroke="#ef7b74" stroke-width="1.300"/>
                        <path d="M953 553.500l9-2.500v5z" fill="#ef7b74"/>
                        <path d="M944.500 550l6.500 7M951 550l-6.500 7" stroke="#c99" stroke-width=".8"/>
                        <path d="M998.500 554v-24" stroke="#176a9c" stroke-width="2.500"/>
                        <path d="M1000 554v-24" stroke="#0d7a4c"/>
                        <path d="M999.500 519l3.500 12h-7z" fill="#12a05a"/>
                        <path d="M996 514h7l-7 7h7" fill="none" stroke="#2a6fa8"/>
                    </svg>
                    <div class="absolute top-[180px] left-[478px] border border-[#888] bg-white px-[3px] text-[8px] leading-[12px] text-[#555] shadow-[1px_2px_1px_#0006]">Center</div>
                </div>

                <!-- Layout tabs -->
                <div class="flex h-3 shrink-0 items-stretch border-b border-[#777] leading-[11px]">
                    <button class="flex w-[12px] items-center justify-center border-r border-[#aaa] bg-[#eee]" aria-label="First"><svg class="size-[6px]" viewBox="0 0 6 6"><path d="M0 0h1v6H0zM5 0v6L1 3z"/></svg></button>
                    <button class="flex w-[11px] items-center justify-center border-r border-[#aaa] bg-[#eee]" aria-label="Previous"><svg class="size-[6px]" viewBox="0 0 6 6"><path d="M5 0v6L1 3z"/></svg></button>
                    <button class="flex w-[12px] items-center justify-center border-r border-[#aaa] bg-[#eee]" aria-label="Next"><svg class="size-[6px]" viewBox="0 0 6 6"><path d="M1 0v6l4-3z"/></svg></button>
                    <button class="flex w-[11px] items-center justify-center border-r border-[#aaa] bg-[#eee]" aria-label="Last"><svg class="size-[6px]" viewBox="0 0 6 6"><path d="M5 0h1v6H5zM1 0v6l4-3z"/></svg></button>
                    <button class="flex w-[11px] items-center justify-center border-r border-[#aaa] bg-[#eee]" aria-label="Layout list"><svg class="size-[6px]" viewBox="0 0 6 6"><path d="M.5.5h5v5h-5zM2 3h2" fill="none" stroke="#444"/></svg></button>
                    <button class="w-[27px] font-bold text-black">Model</button>
                    <button class="w-[35px] border-x border-[#aaa] bg-[#f3f3f3]">Layout1</button>
                    <button class="w-[34px] border-r border-[#aaa] bg-[#f3f3f3]">Layout2</button>
                    <button class="w-[10px] border-r border-[#aaa] bg-[#f3f3f3] font-bold">+</button>
                </div>

                <!-- Command line -->
                <div class="flex h-[66px] shrink-0 bg-[#fbfbfb] font-['Liberation_Mono',monospace] text-[8px] text-[#444]">
                    <div class="flex w-[6px] flex-col items-center gap-[17px] bg-[#f0f0f0] pt-1">
                        <svg class="size-1" viewBox="0 0 4 4"><path d="M0 0l4 4M4 0L0 4" stroke="#333"/></svg>
                        <span class="h-3 border-l-2 border-dotted border-[#666]"></span>
                    </div>
                    <div class="flex min-w-0 flex-1 flex-col">
                        <div class="mt-1 flex h-[45px] flex-col justify-end overflow-hidden pl-[3px] whitespace-pre">
                            <p>: BMFORM</p>
                            <p>Select entities &lt;Empty component&gt;:</p>
                            <p>Entities in set: 1</p>
                            <p>Select entities &lt;Empty component&gt;:</p>
                            <p>Enter local component base point or switch component type or choose template [Local/External/Template settings...] &lt;0,0,0&gt;:</p>
                        </div>
                        <label class="mt-[4px] flex h-3 items-center whitespace-pre">Name for new mechanical component &lt;<mark class="bg-[#77808f] text-[#333]">Component_47</mark>&gt;:<input type="text" value="Pini" class="w-[20px] border-r border-black bg-transparent outline-none"></label>
                    </div>
                    <div class="mt-1 mr-[3px] mb-3 flex w-[10px] flex-col items-center bg-[#f3f3f3] py-[3px]">
                        <svg class="h-[3px] w-[5px]" viewBox="0 0 5 3"><path d="M0 3l2.500-2.500L5 3" fill="none" stroke="#222"/></svg>
                        <span class="mt-auto mb-1 h-3 w-full bg-[#cdcdcd]"></span>
                        <svg class="h-[3px] w-[5px]" viewBox="0 0 5 3"><path d="M0 0l2.500 2.500L5 0" fill="none" stroke="#222"/></svg>
                    </div>
                </div>
            </section>

            <!-- Properties -->
            <aside class="w-[219px] shrink-0 border-l border-[#ddd]">
                <div class="flex h-[5px] items-center justify-center bg-[#f3f3f3]"><span class="w-3 border-t border-dotted border-[#222]"></span></div>
                <div class="mt-[3px] mb-[2px] flex h-[15px] items-center">
                    <select class="ml-[2px] h-[14px] w-[185px] appearance-none border border-[#999] bg-white" aria-label="Selection"><option>No Selection</option></select>
                    <svg class="-ml-2 h-1 w-[5px]" viewBox="0 0 6 4"><path d="M0 0l3 3 3-3" fill="none" stroke="#555"/></svg>
                    <button class="ml-2" aria-label="Quick select"><svg class="size-[11px]" viewBox="0 0 12 12"><path d="M1 1h10v2L7 6v5H5V6L1 3z" fill="#ddd" stroke="#665"/><path d="M10 6L7 9h2l-1 3" fill="none" stroke="#e48a2a"/></svg></button>
                    <button class="ml-[3px] flex h-[14px] flex-1 items-center bg-[#cbe3f8]" aria-label="Visibility"><svg class="size-[12px]" viewBox="0 0 12 12"><path d="M0 6q6-7 12 0-6 6-12 0z" fill="#fff" stroke="#345"/><circle cx="6" cy="6" r="2" fill="#345"/></svg></button>
                </div>
                <table class="w-full table-fixed border-collapse text-left text-[#222]">
                    <colgroup><col class="w-[10px]"><col class="w-[76px]"><col></colgroup>
                    <tbody id="properties"></tbody>
                </table>
            </aside>
        </main>

        <!-- Status bar -->
        <footer class="flex h-[13px] shrink-0 items-center bg-[#efeff0] pl-px whitespace-nowrap">
            <span>Ready</span>
            <span class="mr-6 ml-auto">-1'-2 15/16", 1'-7 1/8", 0"</span>
            <div class="flex pr-[31px] text-center text-[#222]">
                <button class="w-[36px] border-l border-[#ddd]">Standard</button>
                <button class="w-[28px] border-l border-[#ddd]">ISO-25</button>
                <button class="w-[42px] border-l border-[#ddd]">Mechanical</button>
                <button class="w-[24px] border-l border-[#ddd] text-[#888]">SNAP</button>
                <button class="w-[22px] border-l border-[#ddd] text-[#888]">GRID</button>
                <button class="w-[30px] border-l border-[#ddd] text-[#888]">ORTHO</button>
                <button class="w-[28px] border-l border-[#ddd] text-[#888]">POLAR</button>
                <button class="w-[27px] border-x-2 border-[#efeff0] bg-[#c9cedd] text-black">ESNAP</button>
                <button class="w-[32px] border-x-2 border-[#efeff0] bg-[#c9cedd] text-black">STRACK</button>
                <button class="w-[20px] text-[#999]">LWT</button>
                <button class="w-[20px] text-black">TILE</button>
                <button class="w-[36px] text-black">1" = 1'-0"</button>
                <button class="w-[38px] border-x-2 border-[#efeff0] bg-[#c9cedd] text-black">AutoScale</button>
                <button class="w-[24px] border-x-2 border-[#efeff0] bg-[#c9cedd] text-black">DUCS</button>
                <button class="w-[20px] text-[#999]">DYN</button>
                <button class="w-[24px] border-x-2 border-[#efeff0] bg-[#c9cedd] text-black">QUAD</button>
                <button class="w-[15px] text-[#999]">RT</button>
                <button class="w-[20px] border-x-2 border-[#efeff0] bg-[#c9cedd] text-black">HKA</button>
                <button class="w-[30px] text-[#999]">LOCKUI</button>
                <button class="w-[24px] text-black">None</button>
                <button class="flex w-2 items-center justify-center" aria-label="Status bar menu"><svg class="h-[3px] w-1" viewBox="0 0 4 3"><path d="M0 0h4L2 3z"/></svg></button>
            </div>
        </footer>

        <!-- Watermark -->
        <div class="pointer-events-none absolute right-[37px] bottom-[31px] flex items-center gap-5 whitespace-nowrap">
            <svg class="h-[108px] w-[108px] opacity-70" viewBox="823 581 108 108">
                <path d="M929 628C926 600 903 582 877 582C847 582 825 605 825 631C825 643 835 652 847 652C871 652 881 620 895 616C899 615 903 615 906 616C897 609 885 610 877 616C866 624 860 644 846 644C839 644 834 638 834 631C834 607 853 590 877 590C900 590 919 605 929 628Z" fill="#4cae4f"/>
                <path d="M929 628C926 600 903 582 877 582C847 582 825 605 825 631C825 643 835 652 847 652C871 652 881 620 895 616C899 615 903 615 906 616C897 609 885 610 877 616C866 624 860 644 846 644C839 644 834 638 834 631C834 607 853 590 877 590C900 590 919 605 929 628Z" transform="rotate(180 877 635)" fill="url(#blue-fade)"/>
            </svg>
            <div class="pb-2">
                <p class="text-[32px] leading-[38px] text-[#3d66a2]/60">ZenTek Consultants</p>
                <p class="font-['Lato',sans-serif] text-[19px] leading-[26px] text-[#808080]/60">Balancing business and technology</p>
            </div>
        </div>
    </div>

    <script>
        // --- Property grid ---
        const bar = '<i class="mr-[3px] ml-px inline-block h-px w-[67px] bg-[#333] align-middle"></i>';
        const groups = [
            ['General', [
                ['Color', '<i class="mr-[2px] ml-px inline-block size-[9px] border border-[#555] bg-[#ddd] align-middle"></i>ByLayer'],
                ['Layer', '0'],
                ['Linetype', bar + 'ByLayer'],
                ['Linetype scale', '1'],
                ['Lineweight', bar + 'ByLayer'],
                ['Transparency', 'ByLayer'],
                ['Elevation', '0"'],
            ]],
            ['View', [
                ['Camera', `-2'-3 1/2", 4 13/16", -1'-4 1/4"`, 'plus'],
                ['Target', `-2'-3 1/2", 4 1/8", -1'-3 9/16"`, 'plus'],
                ['Perspective', 'Off'],
                ['Lens length', '50 mm'],
                ['Field of view', '38.58'],
                ['Height', `1'-2 1/4"`, 'dim'],
                ['Width', `2'-1 1/8"`, 'dim'],
                ['Clipping', 'Off'],
                ['Front plane', '0"'],
                ['Back plane', '0"'],
                ['Visual style', 'Mechanical'],
            ]],
            ['Misc', [
                ['Annotation scale', `1" = 1'-0"`],
                ['Default lighting', 'Off'],
            ]],
        ];
        const box = (plus) => `<svg class="ml-[2px] block size-[6px]" viewBox="0 0 6 6"><path d="M.5.5h5v5h-5z" fill="#fff" stroke="#999"/><path d="M1 3h4${plus ? 'M3 1v4' : ''}" stroke="#444" stroke-width=".8"/></svg>`;
        let html = '';
        for (const [title, rows] of groups) {
            html += `<tr class="h-3"><td class="p-0">${box(false)}</td><th colspan="2" class="border-r-[3px] border-[#35d07f] bg-[#2e8cfb] py-0 pl-[3px] font-bold text-white">${title}</th></tr>`;
            for (const [name, value, kind] of rows) {
                html += `<tr class="h-3"><td class="p-0">${kind === 'plus' ? box(true) : ''}</td><th scope="row" class="border border-[#c4c4c4] py-0 pl-[2px] font-normal">${name}</th><td class="border border-r-0 border-[#c4c4c4] py-0 pl-[2px] ${kind === 'dim' ? 'text-[#999]' : ''}">${value}</td></tr>`;
            }
        }
        document.getElementById('properties').innerHTML = html;

        // --- Gears: teeth walls first, face on top ---
        function gear(cx, cy, rx, ry, teeth, root, depth) {
            const pts = [];
            for (let i = 0; i < teeth; i++) {
                for (const [off, k] of [[-0.36, root], [-0.16, 1], [0.16, 1], [0.36, root]]) {
                    const a = (i + off) / teeth * 2 * Math.PI - Math.PI / 2;
                    pts.push([cx + rx * k * Math.cos(a), cy + ry * k * Math.sin(a)]);
                }
            }
            const shades = ['#deded8', '#f2f2ec', '#c4c4be', '#858582'];
            const walls = pts.map((p, i) => {
                const q = pts[(i + 1) % pts.length];
                return { y: p[1] + q[1], d: `M${p}L${q}L${q[0]} ${q[1] - depth}L${p[0]} ${p[1] - depth}Z`, fill: shades[i % 4] };
            }).filter(w => w.y / 2 < cy + 4).sort((a, b) => a.y - b.y);
            return walls.map(w => `<path d="${w.d}" fill="${w.fill}" stroke="#444" stroke-width=".4"/>`).join('')
                + `<path d="M${pts.join('L')}Z" fill="#9b9b99"/>`;
        }
        document.getElementById('gears').innerHTML =
            gear(574, 267, 58, 40, 32, 0.88, 13) + gear(689.5, 290, 31, 22, 17, 0.78, 11);
    </script>
</body>
</html>
